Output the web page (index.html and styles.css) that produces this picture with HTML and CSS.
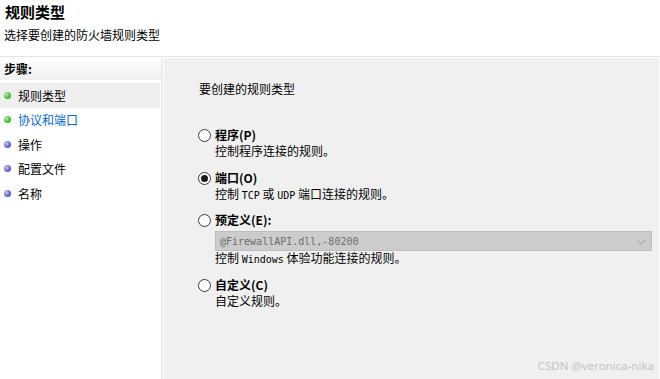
FILE: index.html
```html
<!DOCTYPE html>
<html lang="zh">
<head>
<meta charset="utf-8">
<link rel="stylesheet" href="styles.css">
</head>
<body>
<div class="page">
  <header class="header">
    <h1 class="title">规则类型</h1>
    <p class="subtitle">选择要创建的防火墙规则类型</p>
  </header>
  <div class="main">
    <aside class="steps">
      <div class="steps-head">步骤:</div>
      <ul class="step-list">
        <li class="step step-current"><span class="dot dot-green"></span>规则类型</li>
        <li class="step step-link"><span class="dot dot-green"></span>协议和端口</li>
        <li class="step"><span class="dot dot-blue"></span>操作</li>
        <li class="step"><span class="dot dot-blue"></span>配置文件</li>
        <li class="step"><span class="dot dot-blue"></span>名称</li>
      </ul>
    </aside>
    <section class="content">
      <p class="prompt">要创建的规则类型</p>
      <div class="options">
        <div class="option">
          <div class="opt-title"><span class="radio"></span>程序(P)</div>
          <div class="opt-desc">控制程序连接的规则。</div>
        </div>
        <div class="option">
          <div class="opt-title"><span class="radio radio-on"></span>端口(O)</div>
          <div class="opt-desc">控制 <span class="mono">TCP</span> 或 <span class="mono">UDP</span> 端口连接的规则。</div>
        </div>
        <div class="option option-tight">
          <div class="opt-title"><span class="radio"></span>预定义(E):</div>
          <div class="select"><span class="mono select-text">@FirewallAPI.dll,-80200</span>
            <svg class="chev" width="10" height="6" viewBox="0 0 10 6"><path d="M0.5 0.5 L5 5 L9.5 0.5" fill="none" stroke="#9a9a9a" stroke-width="1"/></svg>
          </div>
          <div class="opt-desc">控制 <span class="mono">Windows</span> 体验功能连接的规则。</div>
        </div>
        <div class="option option-last">
          <div class="opt-title"><span class="radio"></span>自定义(C)</div>
          <div class="opt-desc">自定义规则。</div>
        </div>
      </div>
      <div class="watermark">CSDN @veronica-nika</div>
    </section>
  </div>
</div>
</body>
</html>
```

FILE: styles.css
```css
* { box-sizing: border-box; }
html, body { margin: 0; padding: 0; }
body {
  background: #ffffff;
  font-family: "Noto Sans CJK SC", "Noto Sans", sans-serif;
  font-size: 12px;
  color: #000;
  width: 660px;
  height: 379px;
  overflow: hidden;
}
.page { display: flex; flex-direction: column; height: 379px; }
.header {
  height: 57px;
  padding: 2px 0 0 5px;
  border-bottom: 1px solid #e4e4e4;
  margin-bottom: 1px;
}
.title {
  margin: 0;
  font-size: 15px;
  font-weight: 700;
  line-height: 20px;
}
.subtitle {
  margin: 5px 0 0 -1px;
  font-size: 12px;
  line-height: 16px;
}
.main { flex: 1; display: flex; }
.steps {
  width: 163px;
  border-right: 2px solid #ececec;
  background: #fff;
  margin-right: 1px;
}
.steps-head {
  height: 25px;
  line-height: 22px;
  padding-left: 4px;
  font-weight: 700;
  background: linear-gradient(#ffffff, #f0f0f0);
  border-bottom: 3px solid #ffffff;
}
.step-list { list-style: none; margin: 0; padding: 0; }
.step {
  display: flex;
  align-items: center;
  height: 24.5px;
  padding-left: 4px;
  margin-right: 1px;
}
.step-current { background: #efefef; }
.step-link { color: #0066cc; }
.dot {
  width: 7px;
  height: 7px;
  border-radius: 50%;
  margin-right: 7px;
  flex: none;
}
.dot-green { background: radial-gradient(circle at 35% 35%, #b8f0a8 0, #4fc33a 50%, #2e8f22 100%); }
.dot-blue { background: radial-gradient(circle at 35% 35%, #c8c8f4 0, #6e6ed8 50%, #4040a8 100%); }
.content {
  flex: 1;
  background: #f0f0f0;
  margin-right: 1px;
  padding: 23px 0 0 35px;
  position: relative;
}
.prompt { margin: 0; line-height: 16px; }
.options { display: flex; flex-direction: column; gap: 11px; margin-top: 30px; }
.option { display: flex; flex-direction: column; }
.option-tight { margin-top: -3px; }
.option-last { margin-top: -2px; }
.opt-title {
  display: flex;
  align-items: center;
  font-weight: 700;
  line-height: 16px;
  margin-left: -1px;
}
.opt-desc { padding-left: 16px; line-height: 16px; }
.mono { font-family: "DejaVu Sans Mono", "Liberation Mono", monospace; font-size: 10px; }
.radio {
  width: 13px;
  height: 13px;
  border-radius: 50%;
  border: 1px solid #3a3a3a;
  background: #fff;
  margin-right: 4px;
  display: flex;
  align-items: center;
  justify-content: center;
  flex: none;
}
.radio-on::after {
  content: "";
  width: 7px;
  height: 7px;
  border-radius: 50%;
  background: #1a1a1a;
}
.select {
  margin: 3px 0 -1px 16px;
  width: 437px;
  height: 20px;
  background: #cccccc;
  border: 1px solid #bdbdbd;
  display: flex;
  align-items: center;
  justify-content: space-between;
  padding: 0 5px 0 4px;
}
.select-text { color: #6d6d6d; }
.chev { margin-top: 1px; }
.watermark {
  position: absolute;
  right: 5px;
  bottom: 6px;
  color: #c4c4c4;
  font-family: "Noto Sans", sans-serif;
  font-size: 11.5px;
  line-height: 14px;
}
```
